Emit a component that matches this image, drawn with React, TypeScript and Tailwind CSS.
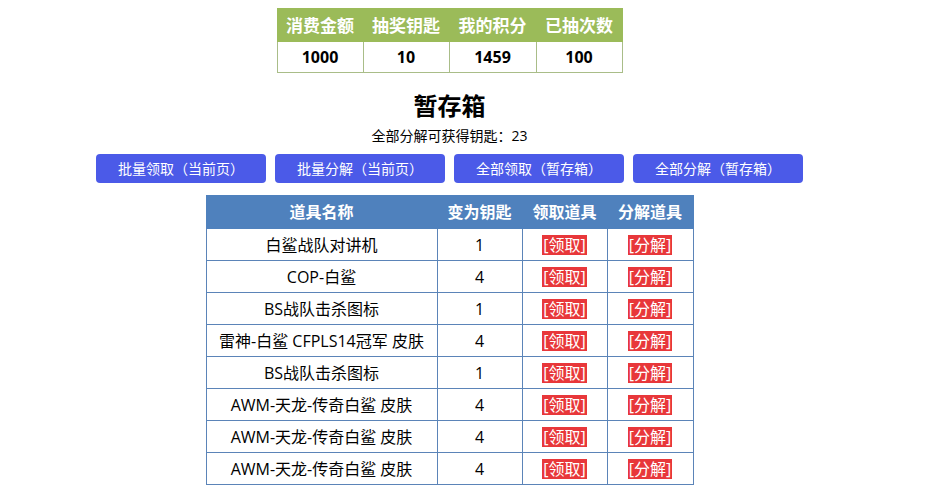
import React from "react";

const font = { fontFamily: '"Open Sans", "Noto Sans CJK SC", sans-serif' };

const rows: [string, number][] = [
  ["白鲨战队对讲机", 1],
  ["COP-白鲨", 4],
  ["BS战队击杀图标", 1],
  ["雷神-白鲨 CFPLS14冠军 皮肤", 4],
  ["BS战队击杀图标", 1],
  ["AWM-天龙-传奇白鲨 皮肤", 4],
  ["AWM-天龙-传奇白鲨 皮肤", 4],
  ["AWM-天龙-传奇白鲨 皮肤", 4],
];

export default function App() {
  return (
    <div className="w-[951px] h-[494px] bg-white overflow-hidden" style={font}>
      <div className="w-[899px] flex flex-col items-center pt-[8px]">
        <table className="border-collapse w-[345px] table-fixed">
          <colgroup>
            <col className="w-[86px]" />
            <col className="w-[86px]" />
            <col className="w-[87px]" />
            <col className="w-[86px]" />
          </colgroup>
          <thead>
            <tr className="bg-[#9bbb59] h-[33px]">
              {["消费金额", "抽奖钥匙", "我的积分", "已抽次数"].map((t) => (
                <th key={t} className="text-white font-bold text-[17px] p-0 text-center border border-[#9bbb59] leading-none">
                  {t}
                </th>
              ))}
            </tr>
          </thead>
          <tbody>
            <tr className="h-[31px]">
              {["1000", "10", "1459", "100"].map((t, i) => (
                <td key={i} className="text-black font-bold text-[16px] p-0 text-center border border-[#a9bd88] leading-none">
                  {t}
                </td>
              ))}
            </tr>
          </tbody>
        </table>

        <div className="mt-[17px] h-[32px] flex items-center text-[24px] font-bold text-black leading-none">暂存箱</div>
        <div className="mt-[4px] h-[20px] flex items-center text-[14px] text-black leading-none">全部分解可获得钥匙：23</div>

        <div className="mt-[8px] flex gap-[9px]">
          {["批量领取（当前页）", "批量分解（当前页）", "全部领取（暂存箱）", "全部分解（暂存箱）"].map((t) => (
            <button key={t} className="w-[170px] h-[29px] rounded-[4px] bg-[#4b5ae8] text-white text-[14px] leading-none flex items-center justify-center">
              {t}
            </button>
          ))}
        </div>

        <table className="mt-[12px] border-collapse table-fixed w-[487px]">
          <colgroup>
            <col className="w-[231px]" />
            <col className="w-[85px]" />
            <col className="w-[85px]" />
            <col className="w-[86px]" />
          </colgroup>
          <thead>
            <tr className="bg-[#4f81bd] h-[33px]">
              {["道具名称", "变为钥匙", "领取道具", "分解道具"].map((t) => (
                <th key={t} className="text-white font-bold text-[16px] p-0 text-center border border-[#4f81bd] leading-none">
                  {t}
                </th>
              ))}
            </tr>
          </thead>
          <tbody>
            {rows.map(([name, n], i) => (
              <tr key={i} className="h-[32px]">
                <td className="p-0 text-center text-[16px] text-black border border-[#5b84b8] leading-none">{name}</td>
                <td className="p-0 text-center text-[16px] text-black border border-[#5b84b8] leading-none">{n}</td>
                <td className="p-0 text-center border border-[#5b84b8]">
                  <span className="inline-block bg-[#e8373a] text-white text-[16px] leading-[20px] px-[1px]">[领取]</span>
                </td>
                <td className="p-0 text-center border border-[#5b84b8]">
                  <span className="inline-block bg-[#e8373a] text-white text-[16px] leading-[20px] px-[1px]">[分解]</span>
                </td>
              </tr>
            ))}
          </tbody>
        </table>
      </div>
    </div>
  );
}
